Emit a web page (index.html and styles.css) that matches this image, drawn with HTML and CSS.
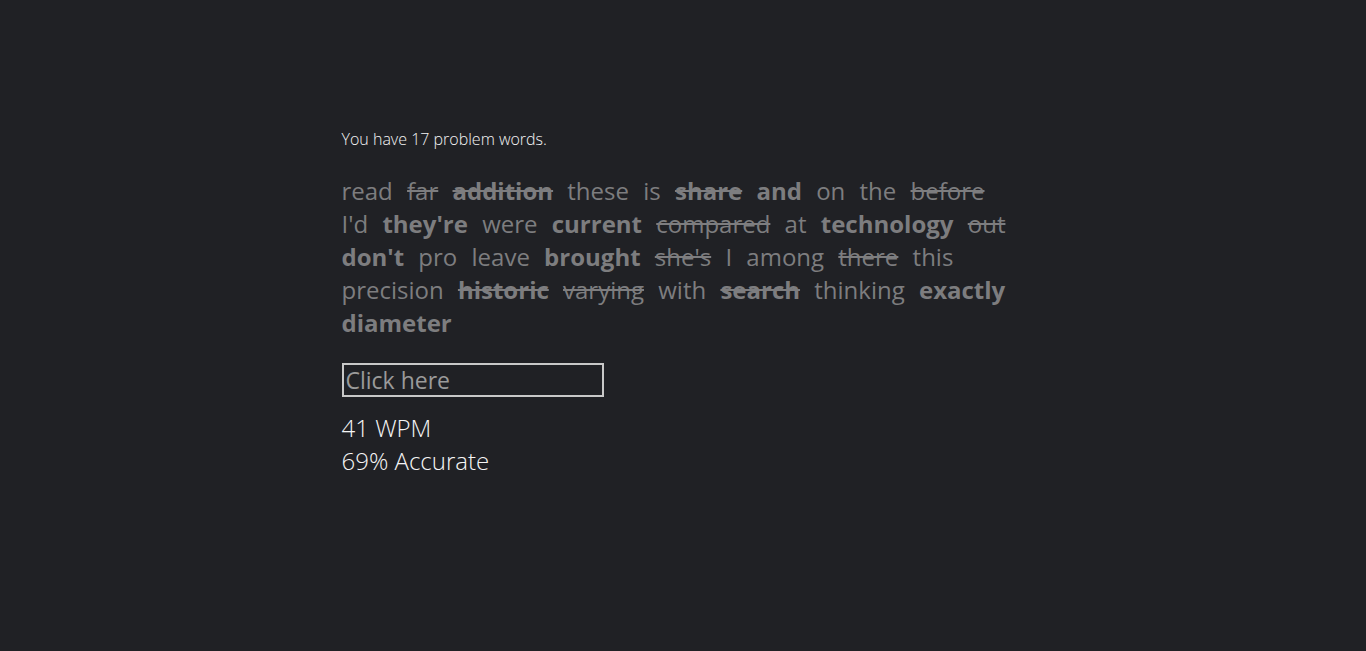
FILE: index.html
```html
<!DOCTYPE html>
<html>
<head>
<meta charset="utf-8">
<link rel="stylesheet" href="styles.css">
</head>
<body>
<main class="app">
  <p class="info">You have 17 problem words.</p>
  <div class="words">
    <span>read</span> <span class="s">far</span> <span class="b s">addition</span> <span>these</span> <span>is</span> <span class="b s">share</span> <span class="b">and</span> <span>on</span> <span>the</span> <span class="s">before</span>
    <span>I'd</span> <span class="b">they're</span> <span>were</span> <span class="b">current</span> <span class="s">compared</span> <span>at</span> <span class="b">technology</span> <span class="s">out</span>
    <span class="b">don't</span> <span>pro</span> <span>leave</span> <span class="b">brought</span> <span class="s">she's</span> <span>I</span> <span>among</span> <span class="s">there</span> <span>this</span>
    <span>precision</span> <span class="b s">historic</span> <span class="s">varying</span> <span>with</span> <span class="b s">search</span> <span>thinking</span> <span class="b">exactly</span>
    <span class="b">diameter</span>
  </div>
  <input class="typer" type="text" placeholder="Click here">
  <div class="stats">
    <div>41 WPM</div>
    <div>69% Accurate</div>
  </div>
</main>
</body>
</html>
```
FILE: styles.css
```css
html, body {
  margin: 0;
  padding: 0;
  background: #202125;
  height: 100%;
}
body {
  font-family: "Open Sans", "Noto Sans", sans-serif;
}
.app {
  width: 50%;
  margin: 0 auto;
  padding-top: 129px;
}
.info {
  margin: 0 0 25px;
  font-size: 16px;
  line-height: 20px;
  font-weight: 300;
  color: #f5f5f5;
}
.words {
  font-size: 24px;
  color: #7d7d7f;
  word-spacing: 8px;
}
.words .b {
  font-weight: 700;
}
.words .s {
  text-decoration: line-through;
}
.typer {
  display: block;
  box-sizing: border-box;
  width: 262px;
  height: 34px;
  margin: 24px 0 14px;
  padding: 0 2px;
  border: 2px solid #c8c8c8;
  background: transparent;
  color: #dddddd;
  font-family: "Open Sans", sans-serif;
  font-size: 23px;
  outline: none;
}
.typer::placeholder {
  color: #9a9a9a;
}
.stats {
  font-size: 24px;
  font-weight: 300;
  color: #f5f5f5;
  line-height: 33px;
}
```
